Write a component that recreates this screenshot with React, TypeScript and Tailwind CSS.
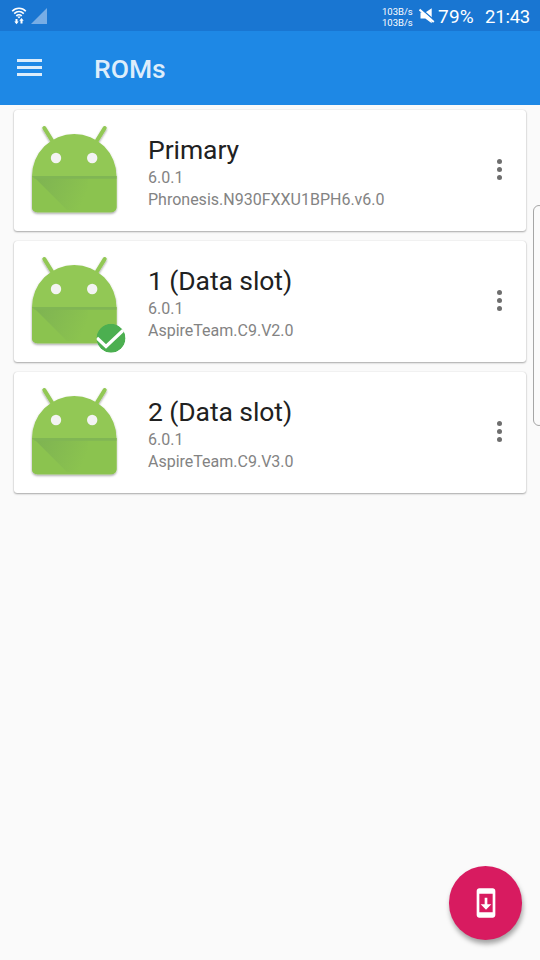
type Rom = { name: string; version: string; build: string; active?: boolean };

const roms: Rom[] = [
  { name: 'Primary', version: '6.0.1', build: 'Phronesis.N930FXXU1BPH6.v6.0' },
  { name: '1 (Data slot)', version: '6.0.1', build: 'AspireTeam.C9.V2.0', active: true },
  { name: '2 (Data slot)', version: '6.0.1', build: 'AspireTeam.C9.V3.0' },
];

function WifiIcon() {
  return (
    <svg className="h-[18px] w-[16px]" viewBox="0 0 16 18" fill="none" stroke="#fff" strokeWidth="1.6">
      <path d="M1.2 4.2C5 .3 11 .3 14.8 4.2M3.2 6.6C6 4 10 4 12.8 6.6M5.2 8.8C7 7.4 9 7.4 10.8 8.8" />
      <path d="M6.2 9.4h3.600L8 11.400z" fill="#fff" stroke="none" />
      <path d="M4.500 12h2v2.500h1.200L5.500 17.300l-2.200-2.800h1.200zM9.500 16.500h2v-2.700h1.200L10.500 11l-2.200 2.800h1.200z" fill="#fff" stroke="none" />
    </svg>
  );
}

function SignalIcon() {
  return (
    <svg className="h-4 w-4" viewBox="0 0 16 16">
      <path d="M16 0v16H0z" fill="#78ade5" />
    </svg>
  );
}

function MuteIcon() {
  return (
    <svg className="h-4 w-4" viewBox="0 0 16 16">
      <path d="M1.500 4.500h4.800L12.700.2v15L6.300 10.600H1.500z" fill="#fff" />
      <path d="M1.600.4 16 13" stroke="#1976d2" strokeWidth="1.500" />
      <path d="M.5 1.600 14.800 14" stroke="#fff" strokeWidth="2" />
    </svg>
  );
}

function Robot({ active, id }: { active?: boolean; id: string }) {
  return (
    <svg className="h-[121px] w-[134px] shrink-0" viewBox="14 110 134 121">
      <defs>
        <linearGradient id={`${id}-fold`} gradientUnits="userSpaceOnUse" x1="36" y1="177" x2="84" y2="199">
          <stop offset="0" stopColor="#7eb352" />
          <stop offset="1" stopColor="#8bc34f" />
        </linearGradient>
        <clipPath id={`${id}-badge`}>
          <circle cx="111" cy="207.200" r="14.500" />
        </clipPath>
        <filter id={`${id}-shadow`} x="-10%" y="-10%" width="120%" height="125%">
          <feDropShadow dx="0" dy="1.400" stdDeviation="0.900" floodColor="#000" floodOpacity="0.380" />
        </filter>
      </defs>
      <g filter={`url(#${id}-shadow)`}>
        <path d="m44.300 128 7.700 12.500M104.700 128 97 140.500" stroke="#92c854" strokeWidth="4" strokeLinecap="round" />
        <path d="M32 176.200a42.250 42.250 0 0 1 84.500 0v31a5 5 0 0 1-5 5H37a5 5 0 0 1-5-5z" fill="#92c854" />
      </g>
      <path d="M32 176h84.500v31.200a5 5 0 0 1-5 5H37a5 5 0 0 1-5-5z" fill="#8bc34f" />
      <path d="M33 176h55v34H67z" fill={`url(#${id}-fold)`} />
      <path d="M32 176h84.500v2.700H34.700z" fill="#80b654" />
      <circle cx="56" cy="158" r="5.200" fill="#f3f3f3" />
      <circle cx="92.200" cy="158" r="5.200" fill="#f3f3f3" />
      {active && (
        <g clipPath={`url(#${id}-badge)`}>
          <circle cx="111" cy="207.200" r="14.500" fill="#4caf50" />
          <path d="m97 207 9 8.500 18-17" fill="none" stroke="#fff" strokeWidth="3.200" />
        </g>
      )}
    </svg>
  );
}

function RomCard({ rom, id }: { rom: Rom; id: string }) {
  return (
    <article className="flex h-[121px] rounded-[3px] bg-white shadow-[0_1px_2px_rgba(0,0,0,0.32),0_0_1px_rgba(0,0,0,0.2)]">
      <Robot active={rom.active} id={id} />
      <div className="min-w-0 flex-1 pt-[24px]">
        <h2 className="text-[26.5px] leading-[32px] tracking-[-0.08px] text-[#212121]">{rom.name}</h2>
        <p className="mt-[1px] text-[16px] leading-[21.500px] text-[#838383]">{rom.version}</p>
        <p className="text-[16px] leading-[21.500px] text-[#838383]">{rom.build}</p>
      </div>
      <button aria-label="Options" className="flex w-[53px] flex-col items-center justify-center gap-[3px] pb-[2px]">
        <span className="size-[5px] rounded-full bg-[#6e6e6e]" />
        <span className="size-[5px] rounded-full bg-[#6e6e6e]" />
        <span className="size-[5px] rounded-full bg-[#6e6e6e]" />
      </button>
    </article>
  );
}

export default function App() {
  return (
    <div className="relative flex h-[960px] w-[540px] flex-col overflow-hidden bg-[#fafafa] font-[Roboto,sans-serif]">
      <div className="flex h-[31px] shrink-0 items-center bg-[#1976d2] pl-[11px] pr-[11px] text-white">
        <WifiIcon />
        <div className="ml-[4px]"><SignalIcon /></div>
        <div className="ml-auto mt-[2px] w-[31px] text-[9.500px] leading-[11px] whitespace-nowrap">
          <div>103B/s</div>
          <div>103B/s</div>
        </div>
        <div className="ml-[6px] pt-[1px]"><MuteIcon /></div>
        <span className="ml-[3px] w-[47px] pt-[3px] text-[19px] leading-[22px] tracking-[0.2px]">79%</span>
        <span className="w-[44px] pt-[3px] text-[18.500px] leading-[22px] tracking-[-0.2px] whitespace-nowrap">21:43</span>
      </div>
      <header className="flex h-[74px] shrink-0 items-center bg-[#1e88e5] pl-[17px]">
        <button aria-label="Menu" className="flex w-[25px] flex-col gap-[4px] pb-[1px]">
          <span className="h-[3px] bg-[#ddedfb]" />
          <span className="h-[3px] bg-[#ddedfb]" />
          <span className="h-[3px] bg-[#ddedfb]" />
        </button>
        <h1 className="ml-[52px] pt-[2px] text-[26.500px] leading-[32px] font-medium text-[#ddedfb]">ROMs</h1>
      </header>
      <main className="flex flex-col gap-[10px] px-[14px] pt-[5px]">
        {roms.map((rom, i) => <RomCard key={rom.name} rom={rom} id={`rom-${i}`} />)}
      </main>
      <div className="absolute top-[205px] left-[533px] h-[221px] w-[12px] rounded-[7px] border border-[#a5a5a5] bg-[#fafafa]" />
      <button aria-label="Install update" className="absolute top-[866px] left-[449px] flex h-[74px] w-[73px] items-center justify-center rounded-full bg-[#d81b60] shadow-[1px_4px_5px_rgba(0,0,0,0.35)]">
        <svg className="size-8" viewBox="0 0 24 24" fill="#fff">
          <path d="M17 1.010 7 1c-1.100 0-2 .9-2 2v18c0 1.100.9 2 2 2h10c1.100 0 2-.9 2-2V3c0-1.100-.9-1.990-2-1.990zM17 19H7V5h10v14zm-1-6h-3V8h-2v5H8l4 4 4-4z" />
        </svg>
      </button>
    </div>
  );
}
